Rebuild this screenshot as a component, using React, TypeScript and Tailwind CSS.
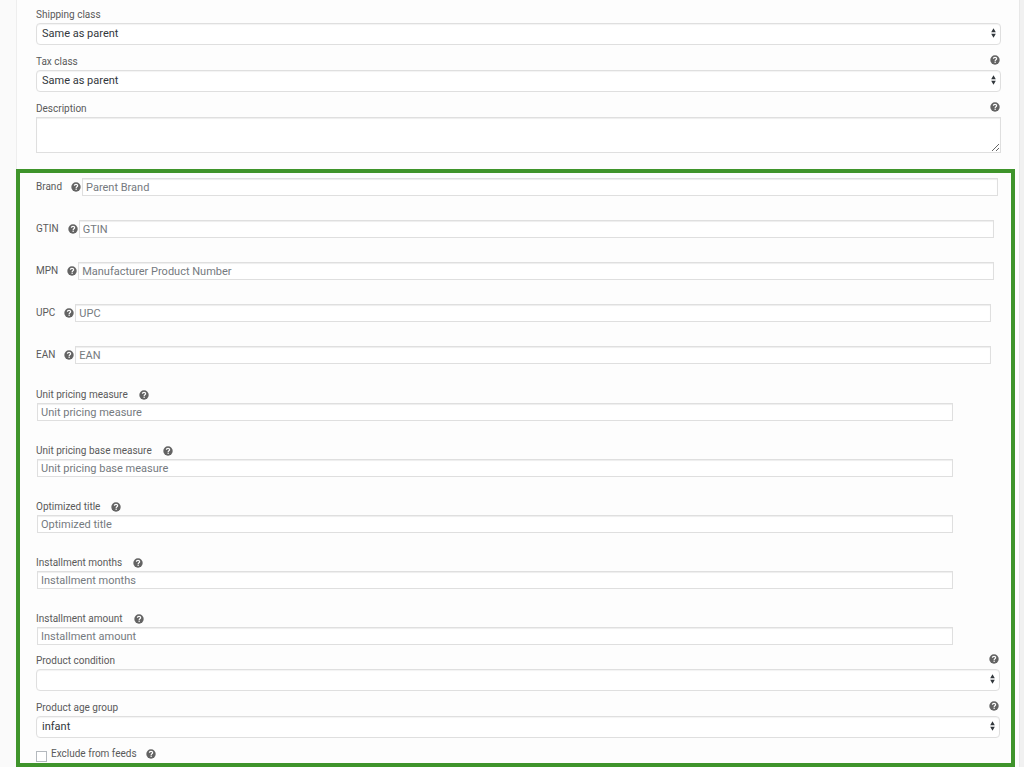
const inlineFields = [
  { id: "brand", label: "Brand", placeholder: "Parent Brand" },
  { id: "gtin", label: "GTIN", placeholder: "GTIN" },
  { id: "mpn", label: "MPN", placeholder: "Manufacturer Product Number" },
  { id: "upc", label: "UPC", placeholder: "UPC" },
  { id: "ean", label: "EAN", placeholder: "EAN" },
];

const stackedFields = [
  { id: "unit-measure", label: "Unit pricing measure" },
  { id: "unit-base-measure", label: "Unit pricing base measure" },
  { id: "optimized-title", label: "Optimized title" },
  { id: "installment-months", label: "Installment months" },
  { id: "installment-amount", label: "Installment amount" },
];

const inputClass =
  "ml-px block h-[18px] w-[95%] shrink-0 border border-[#dfdfdf] bg-white px-[3px] text-[11px] leading-4 text-[#32373c] shadow-[inset_0_1px_1px_rgba(0,0,0,0.07)] outline-none placeholder:text-[#757a80]";

function Help() {
  return (
    <svg viewBox="0 0 20 20" className="size-[10px] shrink-0">
      <circle cx="10" cy="10" r="9.4" fill="#636363" />
      <path
        d="M6.8 7.6C6.8 5.6 8.2 4.7 10 4.7s3.3 1 3.3 2.7c0 2.2-2.9 2.2-2.9 4.5"
        fill="none"
        stroke="#fdfdfd"
        strokeWidth="2.5"
      />
      <rect x="9" y="13.2" width="2.7" height="2.5" fill="#fdfdfd" />
    </svg>
  );
}

function FieldLabel({ id, label, help }: any) {
  return (
    <div className="flex h-4 items-start justify-between">
      <label htmlFor={id}>{label}</label>
      {help && (
        <span className="pt-px pr-px">
          <Help />
        </span>
      )}
    </div>
  );
}

function SelectField({ id, label, help, options }: any) {
  return (
    <div>
      <FieldLabel id={id} label={label} help={help} />
      <div className="relative">
        <select
          id={id}
          className="block h-[22px] w-full appearance-none rounded border border-[#dfdfdf] bg-white px-[5px] text-[11px] text-[#32373c] shadow-[inset_0_1px_1px_rgba(0,0,0,0.05)] outline-none"
        >
          {options.map((o: string) => (
            <option key={o}>{o}</option>
          ))}
        </select>
        {/* up / down arrows */}
        <svg
          viewBox="0 0 5 10"
          className="pointer-events-none absolute top-[5px] right-[5px] h-[10px] w-[5px] fill-[#32373c]"
        >
          <path d="M2.5 0.3 4.8 4.2H0.2zM2.5 9.7 4.8 5.8H0.2z" />
        </svg>
      </div>
    </div>
  );
}

export default function App() {
  return (
    <div className="min-h-screen bg-[#fafafa] font-['Roboto',sans-serif] text-[10px] leading-4 font-normal text-[#5a5a5a]">
      <div className="flex min-h-screen">
        <div className="ml-4 min-w-0 flex-1 bg-[#fdfdfd] pr-1">
          <section className="flex flex-col gap-[9px] border-l border-[#eeeeee] pt-[7px] pr-[14px] pb-4 pl-[19px]">
            <SelectField id="shipping" label="Shipping class" options={["Same as parent"]} />
            <SelectField id="tax" label="Tax class" help options={["Same as parent"]} />
            <div>
              <FieldLabel id="description" label="Description" help />
              <textarea
                id="description"
                className="block h-9 w-full resize-y border border-[#dfdfdf] bg-white p-1 text-[11px] shadow-[inset_0_1px_1px_rgba(0,0,0,0.07)] outline-none"
              />
            </div>
          </section>

          {/* product feed fields */}
          <section className="border-4 border-[#3f942b] pt-[5px] pr-[11px] pb-px pl-4">
            <div className="flex flex-col gap-6">
              {inlineFields.map((f) => (
                <div key={f.id} className="flex items-center">
                  <label htmlFor={f.id} className="mr-[9px]">
                    {f.label}
                  </label>
                  <Help />
                  <input
                    id={f.id}
                    type="text"
                    placeholder={f.placeholder}
                    className={inputClass}
                  />
                </div>
              ))}
            </div>

            <div className="mt-[23px] flex flex-col gap-[22px]">
              {stackedFields.map((f) => (
                <div key={f.id}>
                  <div className="flex h-4 items-center gap-[11px]">
                    <label htmlFor={f.id}>{f.label}</label>
                    <Help />
                  </div>
                  <input
                    id={f.id}
                    type="text"
                    placeholder={f.label}
                    className={inputClass}
                  />
                </div>
              ))}
            </div>

            <div className="mt-2 flex flex-col gap-[9px]">
              <SelectField id="condition" label="Product condition" help options={[""]} />
              <SelectField id="age-group" label="Product age group" help options={["infant"]} />
            </div>

            <div className="mt-2 flex h-4 items-center gap-[9px]">
              <div className="flex items-end gap-1">
                <input
                  id="exclude"
                  type="checkbox"
                  className="size-[11px] appearance-none border border-[#b4b9be] bg-white"
                />
                <label htmlFor="exclude">Exclude from feeds</label>
              </div>
              <Help />
            </div>
          </section>
        </div>
        <div className="w-[5px] shrink-0 border-l border-[#e8e8e8] bg-[#f1f1f1]" />
      </div>
    </div>
  );
}
